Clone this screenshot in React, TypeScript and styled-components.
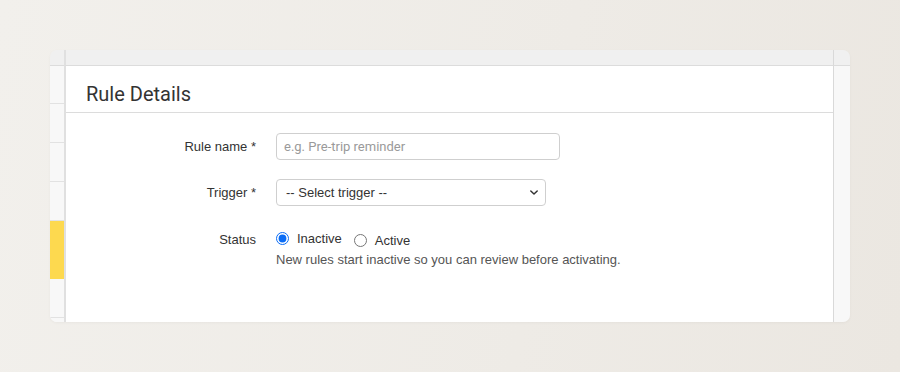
import React from 'react';
import styled, { createGlobalStyle } from 'styled-components';

const GlobalStyle = createGlobalStyle`
  html, body {
    margin: 0;
    padding: 0;
  }
  body {
    font-family: "Liberation Sans", Arial, sans-serif;
    background: #efece7;
  }
`;

const navItems = [
  { height: 38, active: false },
  { height: 39, active: false },
  { height: 39, active: false },
  { height: 39, active: false },
  { height: 58, active: true },
  { height: 39, active: false },
  { height: 20, active: false },
];

const App: React.FC = () => {
  const [status, setStatus] = React.useState<'inactive' | 'active'>('inactive');

  return (
    <>
      <GlobalStyle />
      <Stage>
        <Frame>
          <TopCell />
          <TopCell $divider />
          <TopCell />

          <SideNav>
            {navItems.map((item, i) => (
              <NavItem key={i} $active={item.active} style={{ height: item.height }} />
            ))}
          </SideNav>

          <Panel>
            <PanelHeader>
              <Title>Rule Details</Title>
            </PanelHeader>
            <Form>
              <Label htmlFor="rule-name">Rule name *</Label>
              <Field>
                <TextInput id="rule-name" placeholder="e.g. Pre-trip reminder" />
              </Field>

              <Label htmlFor="trigger">Trigger *</Label>
              <Field>
                <SelectWrap>
                  <Select id="trigger" defaultValue="">
                    <option value="">-- Select trigger --</option>
                    <option value="booking">Booking confirmed</option>
                    <option value="checkin">Before check-in</option>
                  </Select>
                  <Chevron viewBox="0 0 10 6" aria-hidden>
                    <path d="M1 1l4 4 4-4" />
                  </Chevron>
                </SelectWrap>
              </Field>

              <Label as="span" $top>Status</Label>
              <Field $spaced>
                <RadioRow>
                  <RadioLabel>
                    <Radio
                      type="radio"
                      name="status"
                      checked={status === 'inactive'}
                      onChange={() => setStatus('inactive')}
                    />
                    Inactive
                  </RadioLabel>
                  <RadioLabel $lower>
                    <Radio
                      type="radio"
                      name="status"
                      checked={status === 'active'}
                      onChange={() => setStatus('active')}
                    />
                    Active
                  </RadioLabel>
                </RadioRow>
                <Help>New rules start inactive so you can review before activating.</Help>
              </Field>
            </Form>
          </Panel>

          <SideRail />
        </Frame>
      </Stage>
    </>
  );
};

export default App;

const Stage = styled.div`
  width: 900px;
  height: 372px;
  box-sizing: border-box;
  padding: 50px;
  background: linear-gradient(100deg, #f2f0ec 0%, #eeebe6 60%, #ebe7e1 100%);
`;

const Frame = styled.div`
  width: 800px;
  height: 272px;
  border-radius: 7px;
  overflow: hidden;
  display: grid;
  grid-template-columns: 14px 1fr 16px;
  grid-template-rows: 16px 1fr;
  box-shadow: 0 1px 3px rgba(0, 0, 0, 0.04);
`;

const TopCell = styled.div<{ $divider?: boolean }>`
  background: #f0f0f0;
  border-bottom: 1px solid #dcdcdc;
  border-left: ${(p) => (p.$divider ? '2px solid #e0e0e0' : 'none')};
  border-right: ${(p) => (p.$divider ? '1px solid #d9d9d9' : 'none')};
`;

const SideNav = styled.div`
  background: #f8f8f8;
  display: flex;
  flex-direction: column;
`;

const NavItem = styled.div<{ $active?: boolean }>`
  flex: none;
  box-sizing: border-box;
  background: ${(p) => (p.$active ? '#fdd94f' : '#f8f8f8')};
  border-bottom: ${(p) => (p.$active ? 'none' : '1px solid #e2e2e2')};
`;

const Panel = styled.section`
  background: #fff;
  border-left: 2px solid #e0e0e0;
  border-right: 1px solid #d9d9d9;
`;

const PanelHeader = styled.header`
  height: 47px;
  box-sizing: border-box;
  padding: 0 20px;
  display: flex;
  align-items: center;
  border-bottom: 1px solid #dcdcdc;
`;

const Title = styled.h2`
  margin: 0;
  padding-top: 10px;
  font-family: Roboto, "Liberation Sans", sans-serif;
  font-size: 20px;
  font-weight: 400;
  color: #333;
`;

const Form = styled.div`
  display: grid;
  grid-template-columns: 190px 1fr;
  column-gap: 20px;
  row-gap: 19px;
  padding-top: 20px;
  align-items: center;
`;

const Label = styled.label<{ $top?: boolean }>`
  justify-self: end;
  align-self: ${(p) => (p.$top ? 'start' : 'center')};
  padding-top: ${(p) => (p.$top ? '7px' : '0')};
  font-size: 13px;
  color: #333;
`;

const Field = styled.div<{ $spaced?: boolean }>`
  display: flex;
  flex-direction: column;
  align-items: flex-start;
  padding-top: ${(p) => (p.$spaced ? '6px' : '0')};
`;

const TextInput = styled.input`
  width: 284px;
  height: 27px;
  box-sizing: border-box;
  padding: 0 7px;
  border: 1px solid #cfcfcf;
  border-radius: 4px;
  font-family: Roboto, "Liberation Sans", sans-serif;
  font-size: 13px;
  color: #333;
  outline: none;

  &::placeholder {
    color: #9a9a9a;
  }
`;

const SelectWrap = styled.div`
  position: relative;
  width: 270px;
`;

const Select = styled.select`
  width: 100%;
  height: 27px;
  box-sizing: border-box;
  padding: 0 24px 0 9px;
  appearance: none;
  background: #fff;
  border: 1px solid #cfcfcf;
  border-radius: 4px;
  font-family: "Liberation Sans", Arial, sans-serif;
  font-size: 13px;
  color: #333;
  outline: none;
`;

const Chevron = styled.svg`
  position: absolute;
  right: 8px;
  top: 11px;
  width: 8px;
  height: 5px;
  fill: none;
  stroke: #333;
  stroke-width: 1.8;
  stroke-linecap: round;
  stroke-linejoin: round;
  pointer-events: none;
`;

const RadioRow = styled.div`
  display: flex;
  align-items: center;
  gap: 12px;
  height: 16px;
`;

const RadioLabel = styled.label<{ $lower?: boolean }>`
  display: flex;
  align-items: center;
  gap: 8px;
  font-size: 13px;
  color: #333;
  position: relative;
  top: ${(p) => (p.$lower ? '1px' : '-1px')};
`;

const Radio = styled.input`
  margin: 0;
  width: 13px;
  height: 13px;
  accent-color: #0a6cf5;
`;

const Help = styled.p`
  margin: 5px 0 0;
  font-size: 13px;
  color: #555;
`;

const SideRail = styled.div`
  background: #f8f8f8;
`;
